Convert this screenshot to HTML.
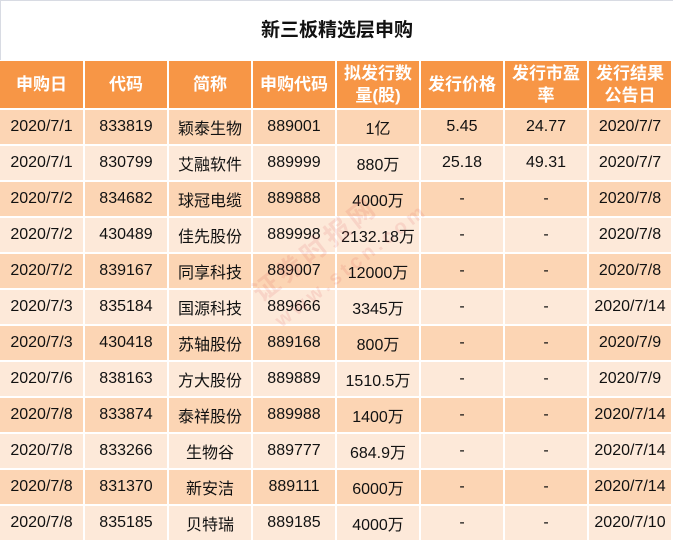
<!DOCTYPE html>
<html><head><meta charset="utf-8"><style>
body{margin:0;width:673px;height:542px;background:#fff;position:relative;overflow:hidden;font-family:"Liberation Sans","Noto Sans CJK SC",sans-serif}
.t{position:absolute;left:0;top:0;width:673px;height:60px;line-height:60px;text-align:center;font-weight:bold;font-size:19px;color:#111;border-top:1px solid #d8dbe3;border-left:1px solid #d8dbe3;box-sizing:border-box}
.c{position:absolute;display:flex;align-items:center;justify-content:center;text-align:center;font-size:16px;color:#111;white-space:nowrap}
.h{background:#f79646;color:#fff;font-weight:bold;font-size:17px;line-height:22px;white-space:normal}
.a{background:#fcd5b4}.b{background:#fde9d9}
.wm{position:absolute;left:245px;top:215px;transform:rotate(-38deg);color:rgba(220,80,80,0.13);font-size:26px;font-weight:bold;letter-spacing:4px;white-space:nowrap}
</style></head><body>
<div class="t">新三板精选层申购</div>
<div id="g"></div>
<div class="wm">证券时报网<br><span style="font-size:20px">www.stcn.com</span></div>
<script>
var H=["申购日","代码","简称","申购代码","拟发行数<br>量(股)","发行价格","发行市盈<br>率","发行结果<br>公告日"];
var R=[
["2020/7/1","833819","颖泰生物","889001","1亿","5.45","24.77","2020/7/7"],
["2020/7/1","830799","艾融软件","889999","880万","25.18","49.31","2020/7/7"],
["2020/7/2","834682","球冠电缆","889888","4000万","-","-","2020/7/8"],
["2020/7/2","430489","佳先股份","889998","2132.18万","-","-","2020/7/8"],
["2020/7/2","839167","同享科技","889007","12000万","-","-","2020/7/8"],
["2020/7/3","835184","国源科技","889666","3345万","-","-","2020/7/14"],
["2020/7/3","430418","苏轴股份","889168","800万","-","-","2020/7/9"],
["2020/7/6","838163","方大股份","889889","1510.5万","-","-","2020/7/9"],
["2020/7/8","833874","泰祥股份","889988","1400万","-","-","2020/7/14"],
["2020/7/8","833266","生物谷","889777","684.9万","-","-","2020/7/14"],
["2020/7/8","831370","新安洁","889111","6000万","-","-","2020/7/14"],
["2020/7/8","835185","贝特瑞","889185","4000万","-","-","2020/7/10"]];
var s="";
function L(j){return j?84*j+1:0}
function W(j){return j?82:83}
for(var j=0;j<8;j++)s+='<div class="c h" style="left:'+L(j)+'px;top:61px;width:'+W(j)+'px;height:47px">'+H[j]+'</div>';
for(var i=0;i<12;i++)for(var j=0;j<8;j++)s+='<div class="c '+(i%2?'b':'a')+'" style="left:'+L(j)+'px;top:'+(110+36*i)+'px;width:'+W(j)+'px;height:34px">'+R[i][j]+'</div>';
document.getElementById("g").innerHTML=s;
</script>
</body></html>
